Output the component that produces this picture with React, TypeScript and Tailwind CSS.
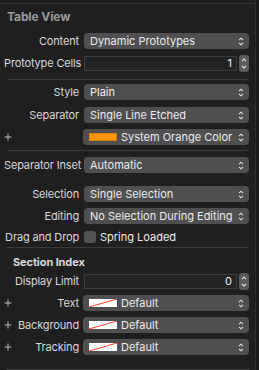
import * as React from 'react'

const font = { fontFamily: 'Inter, "Liberation Sans", sans-serif' }

function Chevrons() {
  return (
    <svg width="6" height="9" viewBox="0 0 6 9" className="shrink-0">
      <path d="M1 3.2 L3 1.2 L5 3.2 M1 5.8 L3 7.8 L5 5.8" fill="none" stroke="#e0e0e0" strokeWidth="1.1" />
    </svg>
  )
}

function Plus() {
  return (
    <svg width="8" height="8" viewBox="0 0 8 8" className="shrink-0">
      <path d="M4 0.5 V7.5 M0.5 4 H7.5" stroke="#b8b8b8" strokeWidth="1" />
    </svg>
  )
}

function NoColor() {
  return (
    <svg width="28" height="8" viewBox="0 0 28 8" className="shrink-0">
      <rect x="0" y="0" width="28" height="8" fill="#ffffff" />
      <path d="M0 8 L28 0" stroke="#ff3b30" strokeWidth="1" />
    </svg>
  )
}

function Row({ label, plus, children, h = 'h-[22px]' }: { label: string; plus?: boolean; children: React.ReactNode; h?: string }) {
  return (
    <div className={`flex items-center ${h}`}>
      <div className="w-[79px] flex items-center justify-between pl-[4px] shrink-0">
        {plus ? <Plus /> : <span />}
        <span className="text-[11px] text-[#d8d8d8] whitespace-nowrap tracking-[-0.15px]">{label}</span>
      </div>
      <div className="flex-1 ml-[5px] flex items-center">{children}</div>
    </div>
  )
}

function Popup({ children }: { children: React.ReactNode }) {
  return (
    <div className="flex-1 h-[16px] rounded-[4px] bg-[#4f4f51] flex items-center pl-[6px] pr-[5px]">
      <span className="flex-1 text-[11px] text-[#ececec] whitespace-nowrap flex items-center gap-[4px]">{children}</span>
      <Chevrons />
    </div>
  )
}

function Stepper({ value }: { value: string }) {
  return (
    <div className="flex-1 flex items-center">
      <div className="flex-1 h-[15px] bg-[#232324] border border-[#3b3b3d] flex items-center justify-end pr-[4px] text-[11px] text-[#ececec]">
        {value}
      </div>
      <div className="ml-[2px] w-[10px] h-[17px] rounded-[3px] bg-[#5b5b5d] flex flex-col items-center justify-center gap-[3px]">
        <svg width="6" height="4" viewBox="0 0 6 4"><path d="M1 3.2 L3 1 L5 3.2" fill="none" stroke="#e6e6e6" strokeWidth="1.1" /></svg>
        <svg width="6" height="4" viewBox="0 0 6 4"><path d="M1 0.8 L3 3 L5 0.8" fill="none" stroke="#e6e6e6" strokeWidth="1.1" /></svg>
      </div>
    </div>
  )
}

function Line({ mt }: { mt: string }) {
  return <div className={`${mt} ml-[7px] mr-[6px] h-px bg-[#3a3a3c]`} />
}

export default function App() {
  return (
    <div style={font} className="w-[259px] h-[370px] bg-[#1a1a1a] overflow-hidden">
      <div className="w-[256px] h-[370px] bg-[#1f1f20] border-r border-[#2e2e30] flex flex-col">
        <div className="mt-[3px] h-px bg-[#333335]" />
        <div className="h-[27px] pl-[7px] pt-[4px] text-[12px] font-bold text-[#9b9b9b] tracking-[-0.1px]">Table View</div>
        <div className="pr-[6px] flex flex-col">
          <Row label="Content"><Popup>Dynamic Prototypes</Popup></Row>
          <Row label="Prototype Cells"><Stepper value="1" /></Row>
        </div>
        <Line mt="mt-[5px]" />
        <div className="pr-[6px] flex flex-col">
          <div className="mt-[1px]" />
          <Row label="Style"><Popup>Plain</Popup></Row>
          <div className="mt-[1px]" />
          <Row label="Separator"><Popup>Single Line Etched</Popup></Row>
          <Row label="" plus>
            <div className="flex-1 -ml-[1px] h-[16px] rounded-[4px] bg-[#4f4f51] flex items-center pl-[6px] pr-[5px]">
              <span className="w-[28px] h-[8px] bg-[#ff9500] border border-[#e08000] shrink-0" />
              <span className="flex-1 ml-[4px] text-[11px] text-[#ececec] whitespace-nowrap">System Orange Color</span>
              <Chevrons />
            </div>
          </Row>
        </div>
        <Line mt="mt-[2px]" />
        <div className="pr-[6px] flex flex-col">
          <div className="mt-[3px]" />
          <Row label="Separator Inset"><Popup>Automatic</Popup></Row>
          <div className="mt-[7px]" />
          <Row label="Selection"><Popup>Single Selection</Popup></Row>
          <Row label="Editing"><Popup>No Selection During Editing</Popup></Row>
          <Row label="Drag and Drop" h="h-[20px]">
            <span className="w-[12px] h-[12px] rounded-[3px] bg-[#545456]" />
            <span className="ml-[4px] text-[11px] text-[#ececec]">Spring Loaded</span>
          </Row>
        </div>
        <Line mt="mt-0" />
        <div className="h-[23px] pl-[13px] pt-[6px] text-[11px] font-bold text-[#dadada] tracking-[-0.1px]">Section Index</div>
        <div className="pr-[6px] flex flex-col">
          <Row label="Display Limit" h="h-[21px]"><Stepper value="0" /></Row>
          <Row label="Text" plus>
            <div className="flex-1 -ml-[1px] flex"><Popup><NoColor />Default</Popup></div>
          </Row>
          <Row label="Background" plus>
            <div className="flex-1 -ml-[1px] flex"><Popup><NoColor />Default</Popup></div>
          </Row>
          <Row label="Tracking" plus>
            <div className="flex-1 -ml-[1px] flex"><Popup><NoColor />Default</Popup></div>
          </Row>
        </div>
        <Line mt="mt-[11px]" />
      </div>
    </div>
  )
}
